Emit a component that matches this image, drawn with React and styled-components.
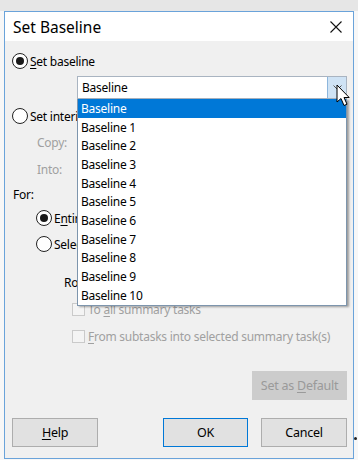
import React from "react";
import styled, { createGlobalStyle } from "styled-components";

const GlobalStyle = createGlobalStyle`
  html, body {
    margin: 0;
    padding: 0;
    background: #e9e9e9;
    font-family: "Noto Sans", "Open Sans", sans-serif;
  }
`;

const Page = styled.div`
  width: 358px;
  height: 460px;
  padding: 11px 4px 0 4px;
  box-sizing: border-box;
  background: linear-gradient(#e6e6e6 0, #e6e6e6 11px, #f7f7f7 11px);
`;

const Dialog = styled.div`
  position: relative;
  width: 350px;
  height: 448px;
  box-sizing: border-box;
  border: 1px solid #6aa3da;
  background: #f0f0f0;
  display: flex;
  flex-direction: column;
`;

const TitleBar = styled.div`
  height: 29px;
  background: #fff;
  display: flex;
  align-items: center;
  justify-content: space-between;
  padding: 0 11px 0 8px;
  font-size: 15.5px;
  color: #000;
`;

const CloseIcon = styled.svg`
  width: 12px;
  height: 12px;
`;

const Body = styled.div`
  flex: 1;
  display: flex;
  flex-direction: column;
  padding: 10px 6px 0 7px;
  font-size: 12px;
  letter-spacing: -0.25px;
  color: #000;
`;

const Row = styled.div`
  height: ${(p) => p.$h || 20}px;
  margin-top: ${(p) => p.$mt || 0}px;
  padding-left: ${(p) => p.$indent || 0}px;
  display: flex;
  align-items: center;
  justify-content: ${(p) => p.$justify || "flex-start"};
  gap: ${(p) => p.$gap || 0}px;
  color: ${(p) => (p.$disabled ? "#a0a0a0" : "#000")};
`;

const RadioCircle = styled.span`
  width: 16px;
  height: 16px;
  box-sizing: border-box;
  border: 1.5px solid #222;
  border-radius: 50%;
  background: #fff;
  display: flex;
  align-items: center;
  justify-content: center;
  margin-right: 2px;
  flex-shrink: 0;
  &::after {
    content: "";
    width: 8px;
    height: 8px;
    border-radius: 50%;
    background: ${(p) => (p.$checked ? "#1a1a1a" : "transparent")};
  }
`;

const CheckBox = styled.span`
  width: 13px;
  height: 13px;
  box-sizing: border-box;
  border: 1px solid #cacaca;
  background: #f4f4f4;
  margin-right: 3px;
  flex-shrink: 0;
`;

const Key = styled.u`
  text-decoration: underline;
  text-underline-offset: 2px;
`;

const Combo = styled.div`
  margin-left: 65px;
  width: 270px;
  height: 23px;
  box-sizing: border-box;
  border: 1px solid #a9b4c1;
  background: #fff;
  display: flex;
  align-items: stretch;
`;

const ComboText = styled.div`
  flex: 1;
  display: flex;
  align-items: center;
  padding-left: 4px;
`;

const ComboButton = styled.div`
  width: 18px;
  background: #cfe3f5;
  border-left: 1px solid #8db6dc;
  display: flex;
  align-items: center;
  justify-content: center;
`;

const List = styled.div`
  position: absolute;
  left: 72px;
  top: 87px;
  width: 270px;
  box-sizing: border-box;
  border: 1px solid #7d95ad;
  border-top: none;
  background: #fff;
  box-shadow: 2px 1px 2px rgba(0, 0, 0, 0.35);
  font-size: 12px;
  letter-spacing: -0.25px;
`;

const Item = styled.div`
  height: 18.7px;
  display: flex;
  align-items: center;
  padding-left: 3px;
  background: ${(p) => (p.$active ? "#0078d7" : "transparent")};
  color: ${(p) => (p.$active ? "#fff" : "#000")};
`;

const Button = styled.div`
  width: ${(p) => p.$w || 86}px;
  height: 29px;
  box-sizing: border-box;
  border: 1px solid ${(p) => (p.$primary ? "#0078d7" : p.$disabled ? "#cccccc" : "#adadad")};
  background: ${(p) => (p.$disabled ? "#cccccc" : "#e1e1e1")};
  color: ${(p) => (p.$disabled ? "#9a9a9a" : "#000")};
  display: flex;
  align-items: center;
  justify-content: center;
  font-size: 12.5px;
`;

const Cursor = styled.svg`
  position: absolute;
  left: 331px;
  top: 72px;
  width: 16px;
  height: 25px;
`;

const Speck = styled.span`
  position: absolute;
  right: -4px;
  top: 425px;
  width: 3px;
  height: 3px;
  border-radius: 50%;
  background: #222;
`;

const items = [
  "Baseline",
  "Baseline 1",
  "Baseline 2",
  "Baseline 3",
  "Baseline 4",
  "Baseline 5",
  "Baseline 6",
  "Baseline 7",
  "Baseline 8",
  "Baseline 9",
  "Baseline 10",
];

export default function App() {
  return (
    <Page>
      <GlobalStyle />
      <Dialog>
        <TitleBar>
          <span>Set Baseline</span>
          <CloseIcon viewBox="0 0 12 12">
            <path d="M0.5 0.5 L11.5 11.5 M11.5 0.5 L0.5 11.5" stroke="#111" strokeWidth="1.1" />
          </CloseIcon>
        </TitleBar>
        <Body>
          <Row>
            <RadioCircle $checked />
            <span>
              <Key>S</Key>et baseline
            </span>
          </Row>
          <Row $h={23} $mt={5}>
            <Combo>
              <ComboText>Baseline</ComboText>
              <ComboButton>
                <svg width="9" height="6" viewBox="0 0 9 6">
                  <path d="M0.5 0.5 L4.5 4.5 L8.5 0.5" fill="none" stroke="#555" strokeWidth="1" />
                </svg>
              </ComboButton>
            </Combo>
          </Row>
          <Row $mt={7}>
            <RadioCircle />
            <span>Set interim plan</span>
          </Row>
          <Row $mt={6} $indent={25} $disabled>
            Copy:
          </Row>
          <Row $mt={7} $indent={25} $disabled>
            Into:
          </Row>
          <Row $mt={5} $indent={1}>
            For:
          </Row>
          <Row $mt={4} $indent={24}>
            <RadioCircle $checked />
            <span>
              E<Key>n</Key>tire project
            </span>
          </Row>
          <Row $mt={6} $indent={24}>
            <RadioCircle />
            <span>Selected tasks</span>
          </Row>
          <Row $mt={18} $indent={52}>
            Roll up baselines:
          </Row>
          <Row $mt={7} $indent={60} $disabled>
            <CheckBox />
            <span>
              To <Key>a</Key>ll summary tasks
            </span>
          </Row>
          <Row $mt={7} $indent={60} $disabled>
            <CheckBox />
            <span>
              <Key>F</Key>rom subtasks into selected summary task(s)
            </span>
          </Row>
          <Row $h={29} $mt={25} $justify="flex-end">
            <Button $w={95} $disabled>
              <span>
                Set as <Key>D</Key>efault
              </span>
            </Button>
          </Row>
          <Row $h={29} $mt={18} $justify="space-between">
            <Button>
              <span>
                <Key>H</Key>elp
              </span>
            </Button>
            <Row $h={29} $gap={13}>
              <Button $w={85} $primary>
                OK
              </Button>
              <Button>Cancel</Button>
            </Row>
          </Row>
        </Body>
        <List>
          {items.map((t, i) => (
            <Item key={t} $active={i === 0}>
              {t}
            </Item>
          ))}
        </List>
        <Cursor viewBox="0 0 16 25">
          <path
            d="M1 1 L1 18 L5 14.5 L8 21.5 L11 20.2 L8 13.5 L13.2 13.5 Z"
            fill="#fff"
            stroke="#000"
            strokeWidth="1"
            strokeLinejoin="round"
          />
        </Cursor>
        <Speck />
      </Dialog>
    </Page>
  );
}
